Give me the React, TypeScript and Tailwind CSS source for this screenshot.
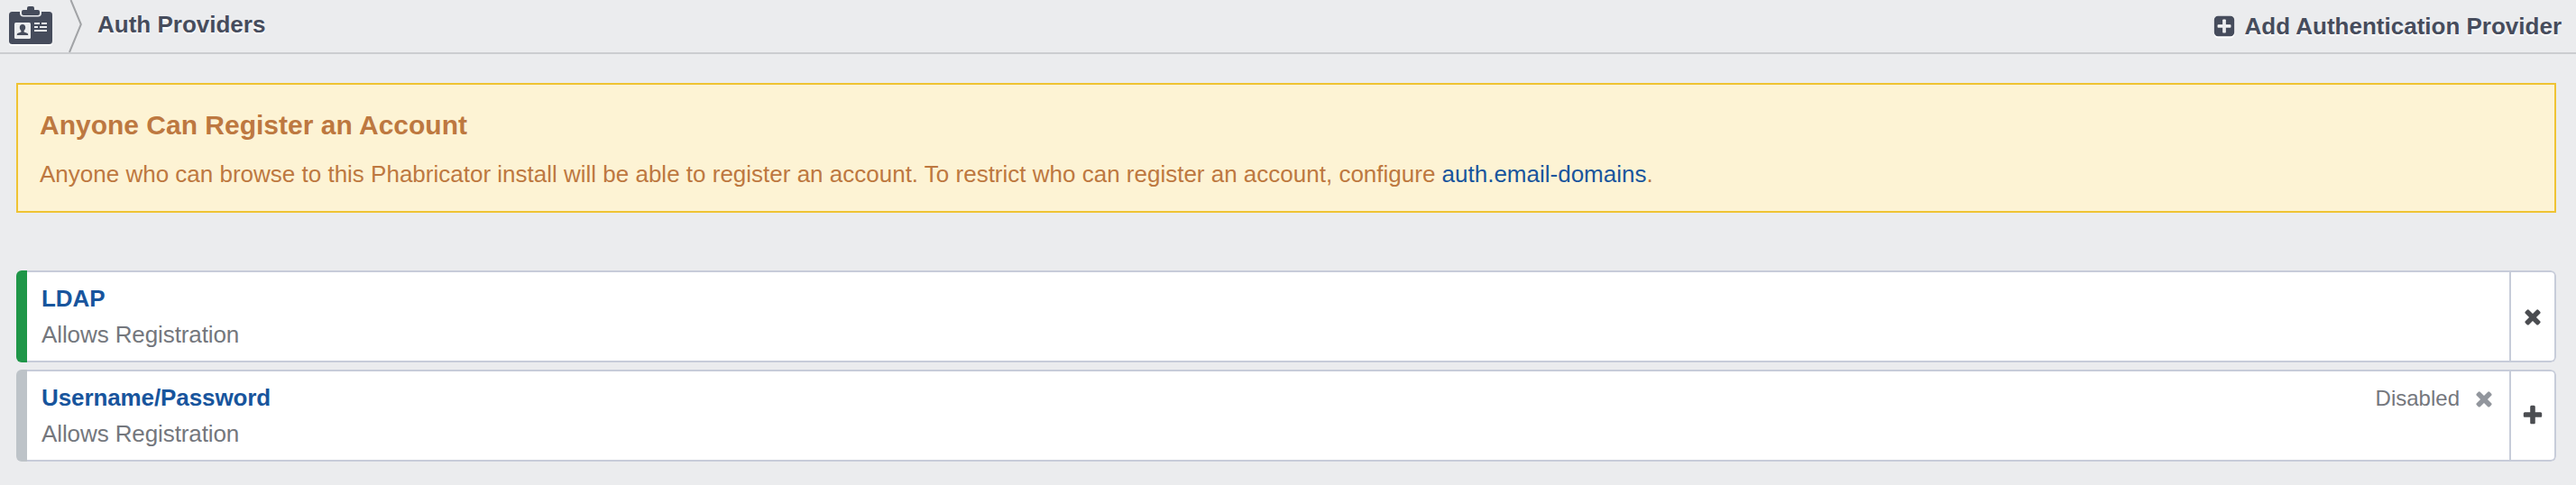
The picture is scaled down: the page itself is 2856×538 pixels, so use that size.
import React from "react";

const TIMES =
  "M1490 1322q0 40-28 68l-136 136q-28 28-68 28t-68-28l-294-294-294 294q-28 28-68 28t-68-28l-136-136q-28-28-28-68t28-68l294-294-294-294q-28-28-28-68t28-68l136-136q28-28 68-28t68 28l294 294 294-294q28-28 68-28t68 28l136 136q28 28 28 68t-28 68l-294 294 294 294q28 28 28 68z";
const PLUS =
  "M1600 736v192q0 40-28 68t-68 28h-416v416q0 40-28 68t-68 28h-192q-40 0-68-28t-28-68v-416h-416q-40 0-68-28t-28-68v-192q0-40 28-68t68-28h416v-416q0-40 28-68t68-28h192q40 0 68 28t28 68v416h416q40 0 68 28t28 68z";
const PLUS_SQUARE =
  "M1408 960v-128q0-26-19-45t-45-19h-320v-320q0-26-19-45t-45-19h-128q-26 0-45 19t-19 45v320h-320q-26 0-45 19t-19 45v128q0 26 19 45t45 19h320v320q0 26 19 45t45 19h128q26 0 45-19t19-45v-320h320q26 0 45-19t19-45zm256-544v960q0 119-84.5 203.5t-203.5 84.5h-960q-119 0-203.5-84.5t-84.5-203.5v-960q0-119 84.5-203.5t203.5-84.5h960q119 0 203.5 84.5t84.5 203.5z";

function Glyph({ d, className }: { d: string; className?: string }) {
  return (
    <svg viewBox="0 0 1792 1792" className={`size-[26px] shrink-0 fill-current ${className ?? ""}`}>
      <path d={d} />
    </svg>
  );
}

function BadgeIcon() {
  return (
    <svg viewBox="0 0 48 44" className="h-[44px] w-[48px] shrink-0">
      <rect x="0" y="8" width="48" height="36" rx="3.5" fill="#fff" />
      <rect x="0" y="6" width="48" height="36" rx="3.5" fill="#464c5c" />
      <path d="M12 6h24v1.500a4 4 0 0 1-4 4H16a4 4 0 0 1-4-4z" fill="#ebecee" />
      <path d="M20 4V2a2 2 0 0 1 2-2h4a2 2 0 0 1 2 2v2h4a2 2 0 0 1 2 2v2a2 2 0 0 1-2 2H16a2 2 0 0 1-2-2V6a2 2 0 0 1 2-2z" fill="#464c5c" />
      <rect x="6" y="18" width="18" height="18" rx="1.500" fill="#ebecee" />
      <path d="M15 20c2 0 3.200 1.400 3.200 3.600 0 1.500-.6 2.700-1.600 3.400v1.400l3.400 1.400c.8.400 1.200 1 1.200 2.200H8.800c0-1.200.4-1.800 1.200-2.200l3.400-1.400V27c-1-.7-1.600-1.900-1.600-3.400 0-2.200 1.200-3.600 3.200-3.600z" fill="#464c5c" />
      <path d="M28 19h6M36 19h6M28 23h4M34 23h8M28 27h14" stroke="#ebecee" strokeWidth="2" />
    </svg>
  );
}

function Provider({
  name,
  bar,
  action,
  disabled,
}: {
  name: string;
  bar: string;
  action: string;
  disabled?: boolean;
}) {
  return (
    <li className="flex h-[102px] overflow-hidden rounded-md">
      <div className={`w-3 shrink-0 ${bar}`} />
      <div className="flex flex-1 rounded-r-md border-y-2 border-r-2 border-[#c7ccd9] bg-white">
        <div className="flex-1 pl-4 pt-[11px]">
          <a className="block text-[26px] font-bold leading-[36px] tracking-[-0.1px] text-[#18559d]">{name}</a>
          <p className="mt-[4px] text-[26px] leading-[36px] tracking-[-0.1px] text-[#74777d]">Allows Registration</p>
        </div>
        {disabled && (
          <div className="flex h-[52px] items-center pr-[15px] pt-[8px] text-[#74777d]">
            <span className="mr-[14px] text-[24px] leading-[36px]">Disabled</span>
            <Glyph d={TIMES} className="text-[#92969d]" />
          </div>
        )}
        <button className="flex w-[50px] items-center justify-center border-l-2 border-[#c7ccd9] text-[#4b4d51]">
          <Glyph d={action} />
        </button>
      </div>
    </li>
  );
}

export default function App() {
  return (
    <div className="h-[538px] w-[2856px] overflow-hidden bg-[#ebecee] font-['Liberation_Sans',Arial,sans-serif]">
      <header className="flex h-[60px] items-start justify-between border-b-2 border-[#cbcdd0] text-[26px] font-bold text-[#464c5c] [text-shadow:0_2px_1px_#fff]">
        <nav className="flex items-start pl-[10px]">
          <div className="pt-[7px]">
            <BadgeIcon />
          </div>
          <svg viewBox="0 0 16 58" className="ml-[18px] h-[58px] w-[16px]">
            <path d="M2.500 0L13.800 27L1 58" fill="none" stroke="#a1a3a6" strokeWidth="2" />
          </svg>
          <span className="ml-[16px] pt-[9px] leading-[36px]">Auth Providers</span>
        </nav>
        <a className="flex items-center gap-[10px] pr-[16px] pt-[11px] leading-[36px]">
          <Glyph d={PLUS_SQUARE} className="drop-shadow-[0_2px_0_#fff]" />
          <span>Add Authentication Provider</span>
        </a>
      </header>
      <main className="pl-[18px] pr-[22px] pt-8">
        <section className="h-[144px] border-2 border-[#efc333] bg-[#fdf3d4] pl-6 pt-[25px] text-[#bd7840]">
          <h1 className="text-[30px] font-bold leading-[40px]">Anyone Can Register an Account</h1>
          <p className="mt-[16px] text-[26px] leading-[36px]">
            Anyone who can browse to this Phabricator install will be able to register an account. To restrict who can
            register an account, configure <a className="text-[#18559d]">auth.email-domains</a>.
          </p>
        </section>
        <ul className="mt-16 flex flex-col gap-2">
          <Provider name="LDAP" bar="bg-[#1f9648]" action={TIMES} />
          <Provider name="Username/Password" bar="bg-[#bdc3c8]" action={PLUS} disabled />
        </ul>
      </main>
    </div>
  );
}
